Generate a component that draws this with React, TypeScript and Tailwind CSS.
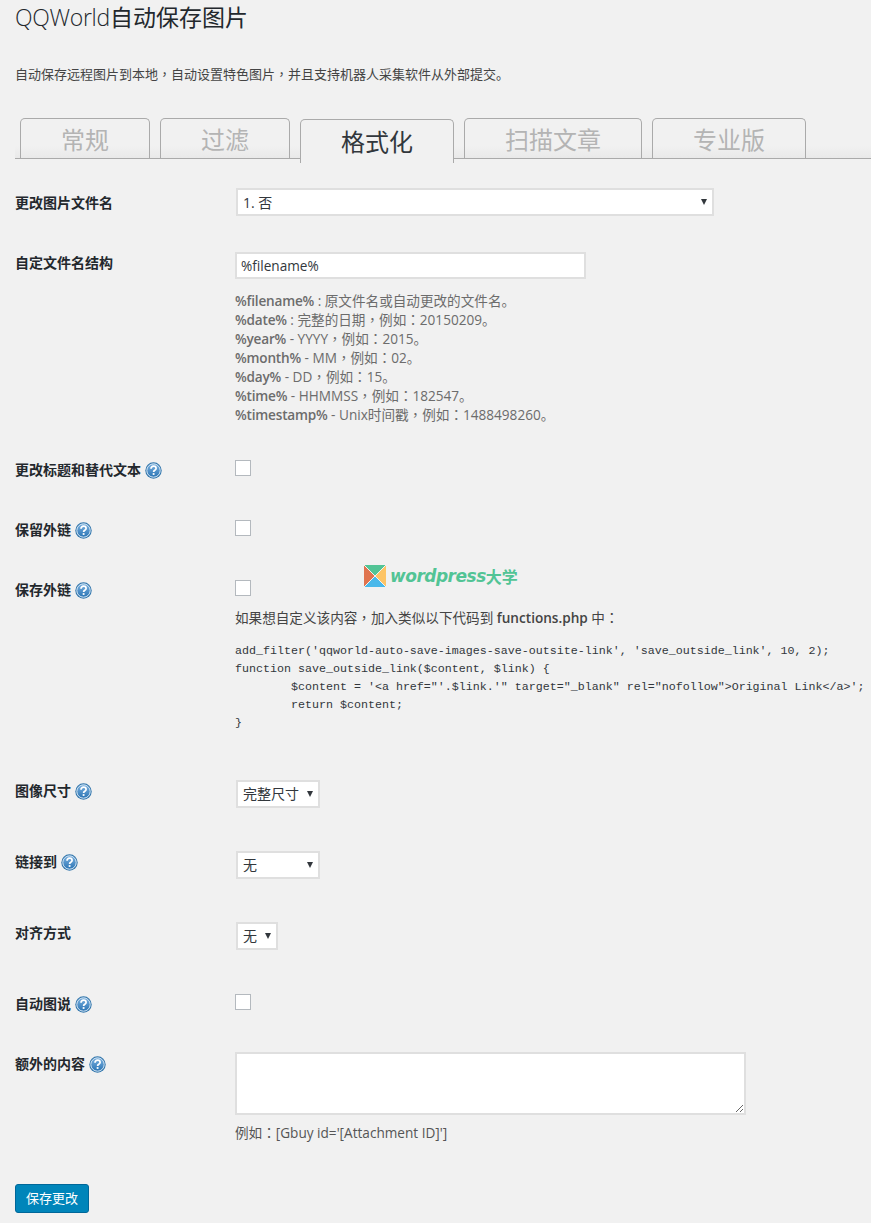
// App.tsx
import React from 'react';

const cjk = 'font-["Open_Sans","Noto_Sans_CJK_SC",sans-serif]';

// full-width comma and colon sit centred in the reference, the TC face draws them so
const Zh: React.FC<{ text: string }> = ({ text }) => (
  <>
    {text.split(/([，：])/).map((part, i) =>
      part === '，' || part === '：' ? (
        <span key={i} className='font-["Noto_Sans_CJK_TC",sans-serif] leading-none'>
          {part}
        </span>
      ) : (
        part
      ),
    )}
  </>
);

const HelpIcon: React.FC = () => (
  <svg width="17" height="17" viewBox="0 0 17 17" className="shrink-0">
    <defs>
      <linearGradient id="helpFill" x1="0" y1="0" x2="0" y2="1">
        <stop offset="0" stopColor="#7db2e0" />
        <stop offset="1" stopColor="#2a74b4" />
      </linearGradient>
    </defs>
    <circle cx="8.5" cy="8.5" r="8.2" fill="#3578ad" />
    <circle cx="8.5" cy="8.5" r="6.7" fill="url(#helpFill)" stroke="#d5e6f5" strokeWidth="1" />
    <path d="M6 6.7c0-1.6 1.1-2.5 2.6-2.5s2.5.9 2.5 2.2c0 1.9-2.5 1.8-2.5 3.5" fill="none" stroke="#fff" strokeWidth="1.7" />
    <rect x="7.7" y="11.1" width="1.8" height="1.8" fill="#fff" />
  </svg>
);

const Label: React.FC<{ text: string; help?: boolean; className?: string }> = ({ text, help, className = '' }) => (
  <div className={`w-[220px] shrink-0 flex items-center gap-[4px] text-[14px] leading-[20px] font-bold text-[#23282d] ${className}`}>
    <span>{text}</span>
    {help && <HelpIcon />}
  </div>
);

const Checkbox: React.FC = () => (
  <input type="checkbox" className="block w-[16px] h-[16px] appearance-none bg-white border border-[#b4b9be]" />
);

const Select: React.FC<{ value: string; className: string; selectClass?: string }> = ({ value, className, selectClass = 'pb-px' }) => (
  <div className={`relative ml-px ${className}`}>
    <select
      defaultValue={value}
      className={`block w-full h-full appearance-none bg-white border-2 border-[#dfdfdf] pl-[5px] text-[14px] text-[#32373c] ${selectClass}`}
    >
      <option>{value}</option>
    </select>
    <span className="absolute right-[7px] top-1/2 -translate-y-1/2 w-0 h-0 border-l-[3.5px] border-r-[3.5px] border-t-[6px] border-l-transparent border-r-transparent border-t-[#32373c]" />
  </div>
);

const Tab: React.FC<{ text: string; className: string }> = ({ text, className }) => (
  <div className={`h-[40px] pt-[2px] flex items-center justify-center border border-b-0 border-[#aaaaaa] rounded-t-[5px] text-[24px] leading-none text-[#b4b4b4] ${className}`}>
    {text}
  </div>
);

const helpLines: [string, string][] = [
  ['%filename%', ' : 原文件名或自动更改的文件名。'],
  ['%date%', ' : 完整的日期，例如：20150209。'],
  ['%year%', ' - YYYY，例如：2015。'],
  ['%month%', ' - MM，例如：02。'],
  ['%day%', ' - DD，例如：15。'],
  ['%time%', ' - HHMMSS，例如：182547。'],
  ['%timestamp%', ' - Unix时间戳，例如：1488498260。'],
];

const code = `add_filter('qqworld-auto-save-images-save-outsite-link', 'save_outside_link', 10, 2);
function save_outside_link($content, $link) {
        $content = '<a href="'.$link.'" target="_blank" rel="nofollow">Original Link</a>';
        return $content;
}`;

export default function App() {
  return (
    <div className={`relative w-[871px] h-[1223px] overflow-hidden bg-[#f1f1f1] pl-[15px] text-[#444] ${cjk}`}>
      <h1 className="pt-[2px] text-[23px] leading-[30px] font-normal text-[#23282d]">
        <span className="font-light tracking-[-0.3px]">QQWorld</span>自动保存图片
      </h1>
      <p className="mt-[32px] text-[13px] leading-[20px] text-[#444]">
        <Zh text="自动保存远程图片到本地，自动设置特色图片，并且支持机器人采集软件从外部提交。" />
      </p>

      {/* tabs */}
      <div className="mt-[34px] flex items-start h-[41px] pl-[5px] gap-[10px] border-b border-[#aaaaaa] bg-gradient-to-b from-[#f1f1f1] from-70% to-[#e9e9e9]">
        <Tab text="常规" className="w-[130px]" />
        <Tab text="过滤" className="w-[130px]" />
        <div className="relative z-10 mt-px w-[154px] h-[44px] flex items-center justify-center border border-b-0 border-[#aaaaaa] rounded-t-[5px] bg-[#f1f1f1] text-[24px] leading-none text-[#32373c]">
          格式化
        </div>
        <Tab text="扫描文章" className="w-[178px]" />
        <Tab text="专业版" className="w-[154px]" />
      </div>

      <div className="mt-[29px] flex items-center h-[28px]">
        <Label text="更改图片文件名" className="mt-[1px]" />
        <Select value="1. 否" className="w-[478px] h-[28px]" selectClass="" />
      </div>

      <div className="mt-[36px] flex items-start">
        <Label text="自定文件名结构" className="mt-[1px]" />
        <div>
          <input
            defaultValue="%filename%"
            className="block w-[351px] h-[27px] bg-white border-2 border-[#dfdfdf] px-[4px] text-[13.6px] text-[#32373c]"
          />
          <div className="mt-[12px] text-[13.6px] leading-[19px] text-[#6c6c6c]">
            {helpLines.map(([name, rest]) => (
              <div key={name}>
                <span className="font-semibold tracking-[-0.2px]">{name}</span>
                <Zh text={rest} />
              </div>
            ))}
          </div>
        </div>
      </div>

      <div className="mt-[36px] flex items-start h-[16px]">
        <Label text="更改标题和替代文本" help />
        <Checkbox />
      </div>

      <div className="mt-[44px] flex items-start h-[16px]">
        <Label text="保留外链" help />
        <Checkbox />
      </div>

      <div className="mt-[44px] flex items-start">
        <Label text="保存外链" help />
        <div>
          <Checkbox />
          <p className="mt-[12px] text-[13.6px] leading-[20px] text-[#444]">
            <Zh text="如果想自定义该内容，加入类似以下代码到 " />
            <span className="font-semibold">functions.php</span>
            <Zh text=" 中：" />
          </p>
          <pre className='mt-[14px] font-["Liberation_Mono",monospace] text-[11.67px] leading-[18px] text-[#32373c]'>{code}</pre>
        </div>
      </div>

      <div className="mt-[48px] flex items-start h-[27px]">
        <Label text="图像尺寸" help className="mt-[1px]" />
        <Select value="完整尺寸" className="w-[84px] h-[28px]" />
      </div>

      <div className="mt-[44px] flex items-start h-[27px]">
        <Label text="链接到" help className="mt-[1px]" />
        <Select value="无" className="w-[84px] h-[28px]" />
      </div>

      <div className="mt-[44px] flex items-start h-[28px]">
        <Label text="对齐方式" className="mt-[1px]" />
        <Select value="无" className="w-[42px] h-[28px]" />
      </div>

      <div className="mt-[44px] flex items-start h-[16px]">
        <Label text="自动图说" help />
        <Checkbox />
      </div>

      <div className="mt-[42px] flex items-start">
        <Label text="额外的内容" help className="mt-[2px]" />
        <div>
          <textarea className="block w-[511px] h-[63px] bg-white border-2 border-[#dfdfdf]" />
          <p className="mt-[8px] text-[13.6px] leading-[20px] text-[#555]">
            <Zh text="例如：[Gbuy id='[Attachment ID]']" />
          </p>
        </div>
      </div>

      <button className="mt-[41px] block w-[74px] h-[29px] rounded-[3px] bg-[#0085ba] border border-[#006799] text-[13px] text-white">
        保存更改
      </button>

      {/* watermark */}
      <div className="absolute left-[364px] top-[565px] flex items-center gap-[4px]">
        <svg width="22" height="22" viewBox="0 0 22 22">
          <polygon points="0,0 22,0 11,11" fill="#52c495" />
          <polygon points="0,0 11,11 0,22" fill="#e0744f" />
          <polygon points="22,0 22,22 11,11" fill="#fdc466" />
          <polygon points="0,22 22,22 11,11" fill="#4ab8ea" />
          <path d="M0 0L22 22M22 0L0 22" stroke="#f1f1f1" strokeWidth="1" />
        </svg>
        <span className='font-["DejaVu_Sans",sans-serif] italic font-bold text-[17px] leading-none tracking-[-0.5px] text-[#52c495]'>
          wordpress
        </span>
        <span className='-ml-[4px] font-["Noto_Sans_CJK_SC",sans-serif] font-bold text-[16px] leading-none text-[#52c495]'>大学</span>
      </div>
    </div>
  );
}
